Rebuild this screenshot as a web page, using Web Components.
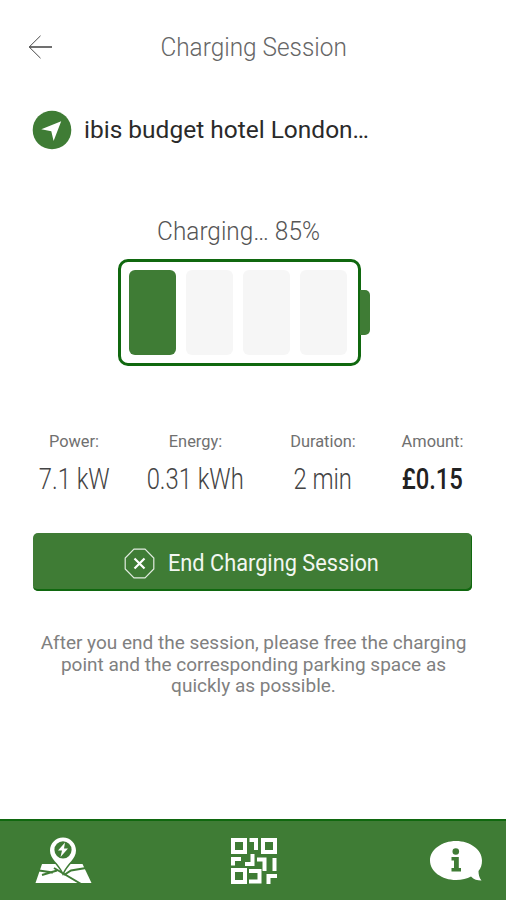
<!DOCTYPE html>
<html lang="en">
<head>
<meta charset="utf-8">
<meta name="viewport" content="width=device-width, initial-scale=1">
<title>Charging Session</title>
<style>
  :root {
    --color-primary: #3f7c35;
    --color-primary-dark: #10680f;
    --color-cell: #f6f6f6;
  }

  body {
    margin: 0;
    background: #fff;
    font-family: Roboto, "Liberation Sans", sans-serif;
  }
</style>
</head>
<body>
<charging-screen></charging-screen>

<script>
/* Top bar with the back arrow and a centred title */
class ScreenHeader extends HTMLElement {
  constructor() {
    super();
    this.attachShadow({ mode: 'open' });
    this.shadowRoot.innerHTML = `
      <style>
        :host {
          display: grid;
          grid-template-columns: 53px 1fr 52px;
          align-items: center;
          height: 94px;
          color: #666;
          font-size: 25px;
          font-weight: 300;
          text-align: center;
        }
        svg { display: block; margin-left: 28px; }
        .title { white-space: nowrap; }
        .title span { display: inline-block; transform: scaleX(.975); }
      </style>
      <svg width="24" height="24" viewBox="0 0 24 24" fill="none" stroke="#333" aria-label="Back">
        <path d="M1.5 12H24" stroke-width="1.4"/>
        <path d="M12.5 .8L1.2 12L12.5 23.2" stroke-width=".9"/>
      </svg>
      <div class="title"><span><slot></slot></span></div>
    `;
  }
}
customElements.define('screen-header', ScreenHeader);

/* Charging point name with the navigation badge */
class LocationRow extends HTMLElement {
  constructor() {
    super();
    this.attachShadow({ mode: 'open' });
    this.shadowRoot.innerHTML = `
      <style>
        :host {
          display: flex;
          align-items: center;
          gap: 12px;
          height: 40px;
          margin: 16px 32px 0;
          color: #2a2a2a;
          font-size: 24px;
          white-space: nowrap;
        }
        svg { flex: none; }
        span { transform: scaleX(1.02); transform-origin: left; }
      </style>
      <svg width="40" height="40" viewBox="0 0 40 40" aria-hidden="true">
        <circle cx="20" cy="20" r="19.3" fill="var(--color-primary)"/>
        <path d="M29.2 11.2L21.6 31L19.3 21.3L9.3 19.2Z" fill="#fff"/>
      </svg>
      <span><slot></slot></span>
    `;
  }
}
customElements.define('location-row', LocationRow);

/* Four cell battery, "filled" tells how many cells are green */
class BatteryGauge extends HTMLElement {
  connectedCallback() {
    const filled = Number(this.getAttribute('filled')) || 0;
    const cells = [0, 1, 2, 3]
      .map((i) => `<div class="cell ${i < filled ? 'on' : ''}"></div>`)
      .join('');

    this.attachShadow({ mode: 'open' }).innerHTML = `
      <style>
        :host {
          display: flex;
          align-items: center;
          margin-left: 118px;
        }
        .body {
          box-sizing: border-box;
          display: grid;
          grid-template-columns: repeat(4, 47px);
          gap: 10px;
          width: 243px;
          height: 107px;
          padding: 8px;
          border: 3px solid var(--color-primary-dark);
          border-radius: 10px;
        }
        .cell { border-radius: 6px; background: var(--color-cell); }
        .on { background: var(--color-primary); }
        .cap {
          width: 10px;
          height: 45px;
          margin-left: -1px;
          border-radius: 0 5px 5px 0;
          background: var(--color-primary);
        }
      </style>
      <div class="body">${cells}</div>
      <div class="cap"></div>
    `;
  }
}
customElements.define('battery-gauge', BatteryGauge);

/* Label above a value */
class SessionStat extends HTMLElement {
  connectedCallback() {
    this.attachShadow({ mode: 'open' }).innerHTML = `
      <style>
        :host {
          display: flex;
          flex-direction: column;
          align-items: center;
          white-space: nowrap;
        }
        .label { color: #707070; font-size: 16.4px; line-height: 20px; }
        .value {
          margin-top: 9px;
          color: #444;
          font-size: 29px;
          font-weight: 300;
          line-height: 36px;
          transform: scaleX(.82);
        }
        :host([strong]) .value { color: #222; font-weight: 500; }
      </style>
      <div class="label">${this.getAttribute('label')}:</div>
      <div class="value"><slot></slot></div>
    `;
  }
}
customElements.define('session-stat', SessionStat);

class EndButton extends HTMLElement {
  constructor() {
    super();
    this.attachShadow({ mode: 'open' });
    this.shadowRoot.innerHTML = `
      <style>
        :host { display: block; margin: 0 34px 0 33px; }
        button {
          box-sizing: border-box;
          display: flex;
          align-items: center;
          width: 100%;
          height: 58px;
          padding: 2px 0 0 91px;
          border: 0;
          border-radius: 5px;
          background: var(--color-primary);
          box-shadow: inset -1px -2px var(--color-primary-dark);
          color: #f2f7f1;
          font: 24px Roboto, "Liberation Sans", sans-serif;
          white-space: nowrap;
        }
        svg { flex: none; margin-right: 13px; }
        span { transform: scaleX(.906); transform-origin: left; }
      </style>
      <button type="button">
        <svg width="31" height="31" viewBox="0 0 31 31" fill="none" stroke="#fff" aria-hidden="true">
          <path d="M10 1.2H21L29.8 10V21L21 29.8H10L1.2 21V10Z" stroke-width="1.2" opacity=".85"/>
          <path d="M10.5 10.5L20.5 20.5M20.5 10.5L10.5 20.5" stroke-width="2.2"/>
        </svg>
        <span><slot></slot></span>
      </button>
    `;
  }
}
customElements.define('end-button', EndButton);

class TabBar extends HTMLElement {
  constructor() {
    super();
    this.attachShadow({ mode: 'open' });
    this.shadowRoot.innerHTML = `
      <style>
        :host {
          box-sizing: border-box;
          display: grid;
          grid-template-columns: 196px 199px 53px;
          align-items: center;
          height: 81px;
          padding-left: 35px;
          border-top: 2px solid var(--color-primary-dark);
          background: var(--color-primary);
        }
        svg { display: block; }
      </style>
      <svg width="57" height="47" viewBox="0 0 57 47" role="img" aria-label="Map">
        <path d="M7 27H47.500L56.500 46H.5Z" fill="#fff"/>
        <path d="M4 33.500L18 35.500M7 38L22 33.500M19 31L47 47.500M29 38L36 33.500L51 31" fill="none" stroke="var(--color-primary)" stroke-width="2"/>
        <path d="M28 .5C20.500 .5 15 6.500 15 13.500C15 22 23.500 26 28 35.500C32.500 26 41 22 41 13.500C41 6.500 35.500 .5 28 .5Z" fill="#fff" stroke="var(--color-primary)" stroke-width="3" paint-order="stroke"/>
        <circle cx="28" cy="12.800" r="8.600" fill="var(--color-primary)"/>
        <path d="M30 5.500L23 13.500H27L25.500 20L33 11.500H29Z" fill="#fff"/>
      </svg>
      <svg width="46" height="46" viewBox="0 0 46 46" fill="none" stroke="#fff" stroke-width="4" role="img" aria-label="Scan code">
        <path d="M2 2H14V14H2ZM32 2H44V14H32ZM2 32H14V44H2Z"/>
        <path d="M18.500 2H25V12"/>
        <path d="M2 27.500V21H10M14 26H21.500V16M26 21.500H33.500V33M43.500 20V33M18 33H28.500V38M18 43.500H30.500M28.500 38V43.500M37.500 46V38H46"/>
      </svg>
      <svg width="53" height="42" viewBox="0 0 53 42" role="img" aria-label="Info">
        <path d="M26 1C12 1 0 9.500 0 20.500S12 40 26 40C32 40 37 38.700 41 36.500C44 39.500 47 40.500 51.500 40.500C49 37.500 48.500 34 48.500 31C51 28 52 24.500 52 20.500C52 9.500 40 1 26 1Z" fill="#fff"/>
        <circle cx="25.800" cy="11.500" r="3.300" fill="var(--color-primary)"/>
        <path d="M21.500 17H28.800V28H31V31.500H21.500V28H24V20.500H21.500Z" fill="var(--color-primary)"/>
      </svg>
    `;
  }
}
customElements.define('tab-bar', TabBar);

class ChargingScreen extends HTMLElement {
  constructor() {
    super();
    this.attachShadow({ mode: 'open' });
    this.shadowRoot.innerHTML = `
      <style>
        :host {
          display: flex;
          flex-direction: column;
          height: 900px;
          overflow: hidden;
        }
        .status {
          margin: 65px 0 10px;
          padding-right: 28px;
          color: #555;
          font-size: 25px;
          font-weight: 300;
          line-height: 34px;
          text-align: center;
        }
        .status span { display: inline-block; transform: scaleX(.975); }
        .stats {
          display: grid;
          grid-template-columns: 112px 131px 124px 95px;
          margin: 66px 0 0 18px;
        }
        end-button { margin-top: 36px; }
        .note {
          margin: 41px 0 0 1px;
          color: #808080;
          font-size: 19px;
          line-height: 21.600px;
          text-align: center;
        }
        .note span { display: block; white-space: nowrap; }
        tab-bar { margin-top: auto; }
      </style>
      <screen-header>Charging Session</screen-header>
      <location-row>ibis budget hotel London…</location-row>
      <div class="status"><span>Charging… 85%</span></div>
      <battery-gauge filled="1"></battery-gauge>
      <div class="stats">
        <session-stat label="Power">7.1 kW</session-stat>
        <session-stat label="Energy">0.31 kWh</session-stat>
        <session-stat label="Duration">2 min</session-stat>
        <session-stat label="Amount" strong>£0.15</session-stat>
      </div>
      <end-button>End Charging Session</end-button>
      <p class="note">
        <span>After you end the session, please free the charging</span>
        <span>point and the corresponding parking space as</span>
        <span>quickly as possible.</span>
      </p>
      <tab-bar></tab-bar>
    `;
  }
}
customElements.define('charging-screen', ChargingScreen);
</script>
</body>
</html>
